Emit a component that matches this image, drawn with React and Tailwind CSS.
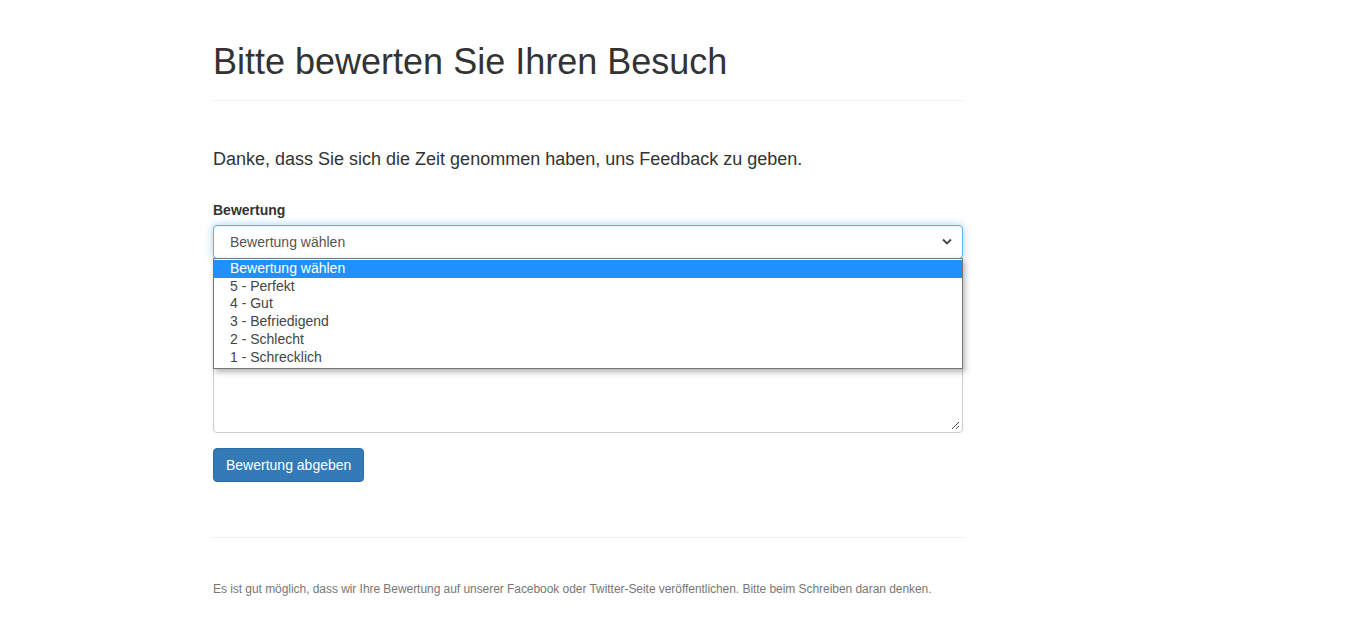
export default function App() {
  const options = [
    "Bewertung wählen",
    "5 - Perfekt",
    "4 - Gut",
    "3 - Befriedigend",
    "2 - Schlecht",
    "1 - Schrecklich",
  ];

  return (
    <div className="min-h-screen bg-white font-['Liberation_Sans',Arial,sans-serif] text-[14px] leading-[20px] text-[#333]">
      <div className="ml-[213px] w-[750px] pt-[41px]">
        {/* page header */}
        <div className="border-b border-[#eee] pb-[8px]">
          <h1 className="mb-[10px] pt-[1px] text-[36px] leading-[39.6px] font-normal text-[#333]">
            Bitte bewerten Sie Ihren Besuch
          </h1>
        </div>

        <p className="mt-[46px] mb-[28px] text-[18px] leading-[25.2px] text-[#333]">
          Danke, dass Sie sich die Zeit genommen haben, uns Feedback zu geben.
        </p>

        <form>
          <div className="relative mb-[15px]">
            <label className="mb-[5px] block font-bold">Bewertung</label>
            <div className="flex h-[34px] items-center justify-between rounded-[4px] border border-[#66afe9] bg-white pl-4 pr-[10px] text-[#555] shadow-[inset_0_1px_1px_rgba(0,0,0,0.075),0_0_8px_rgba(102,175,233,0.6)]">
              <span>Bewertung wählen</span>
              <svg width="10" height="7" viewBox="0 0 10 7" className="text-[#444]">
                <path d="M1 1.5 L5 5.5 L9 1.5" fill="none" stroke="currentColor" strokeWidth="1.8" />
              </svg>
            </div>

            {/* open dropdown list */}
            <ul className="absolute left-0 right-0 top-[58px] z-10 border border-[#767676] bg-white pt-[1px] pb-[1px] shadow-[2px_3px_6px_rgba(0,0,0,0.3)]">
              {options.map((o, i) => (
                <li
                  key={o}
                  className={
                    i === 0
                      ? "h-[17.8px] bg-[#1e90ff] pl-4 text-[14px] leading-[17.8px] text-white"
                      : "h-[17.8px] pl-4 text-[14px] leading-[17.8px] text-[#444]"
                  }
                >
                  {o}
                </li>
              ))}
            </ul>
          </div>

          <div className="mb-[15px]">
            <label className="invisible mb-[5px] block font-bold">Kommentar</label>
            <div className="relative h-[134px] rounded-[4px] border border-[#ccc] bg-white shadow-[inset_0_1px_1px_rgba(0,0,0,0.075)]">
              <svg width="9" height="9" viewBox="0 0 9 9" className="absolute bottom-[2px] right-[2px]">
                <path d="M1 8 L8 1 M5 8 L8 5" stroke="#555" strokeWidth="1" fill="none" />
              </svg>
            </div>
          </div>

          <button
            type="button"
            className="h-[34px] rounded-[4px] border border-[#2e6da4] bg-[#337ab7] px-3 text-[14px] text-white"
          >
            Bewertung abgeben
          </button>
        </form>

        <hr className="mt-[55px] border-0 border-t border-[#eee]" />

        <p className="mt-[43px] text-[12px] leading-[17px] tracking-[-0.05px] text-[#777]">
          Es ist gut möglich, dass wir Ihre Bewertung auf unserer Facebook oder Twitter-Seite veröffentlichen. Bitte beim Schreiben daran denken.
        </p>
      </div>
    </div>
  );
}
